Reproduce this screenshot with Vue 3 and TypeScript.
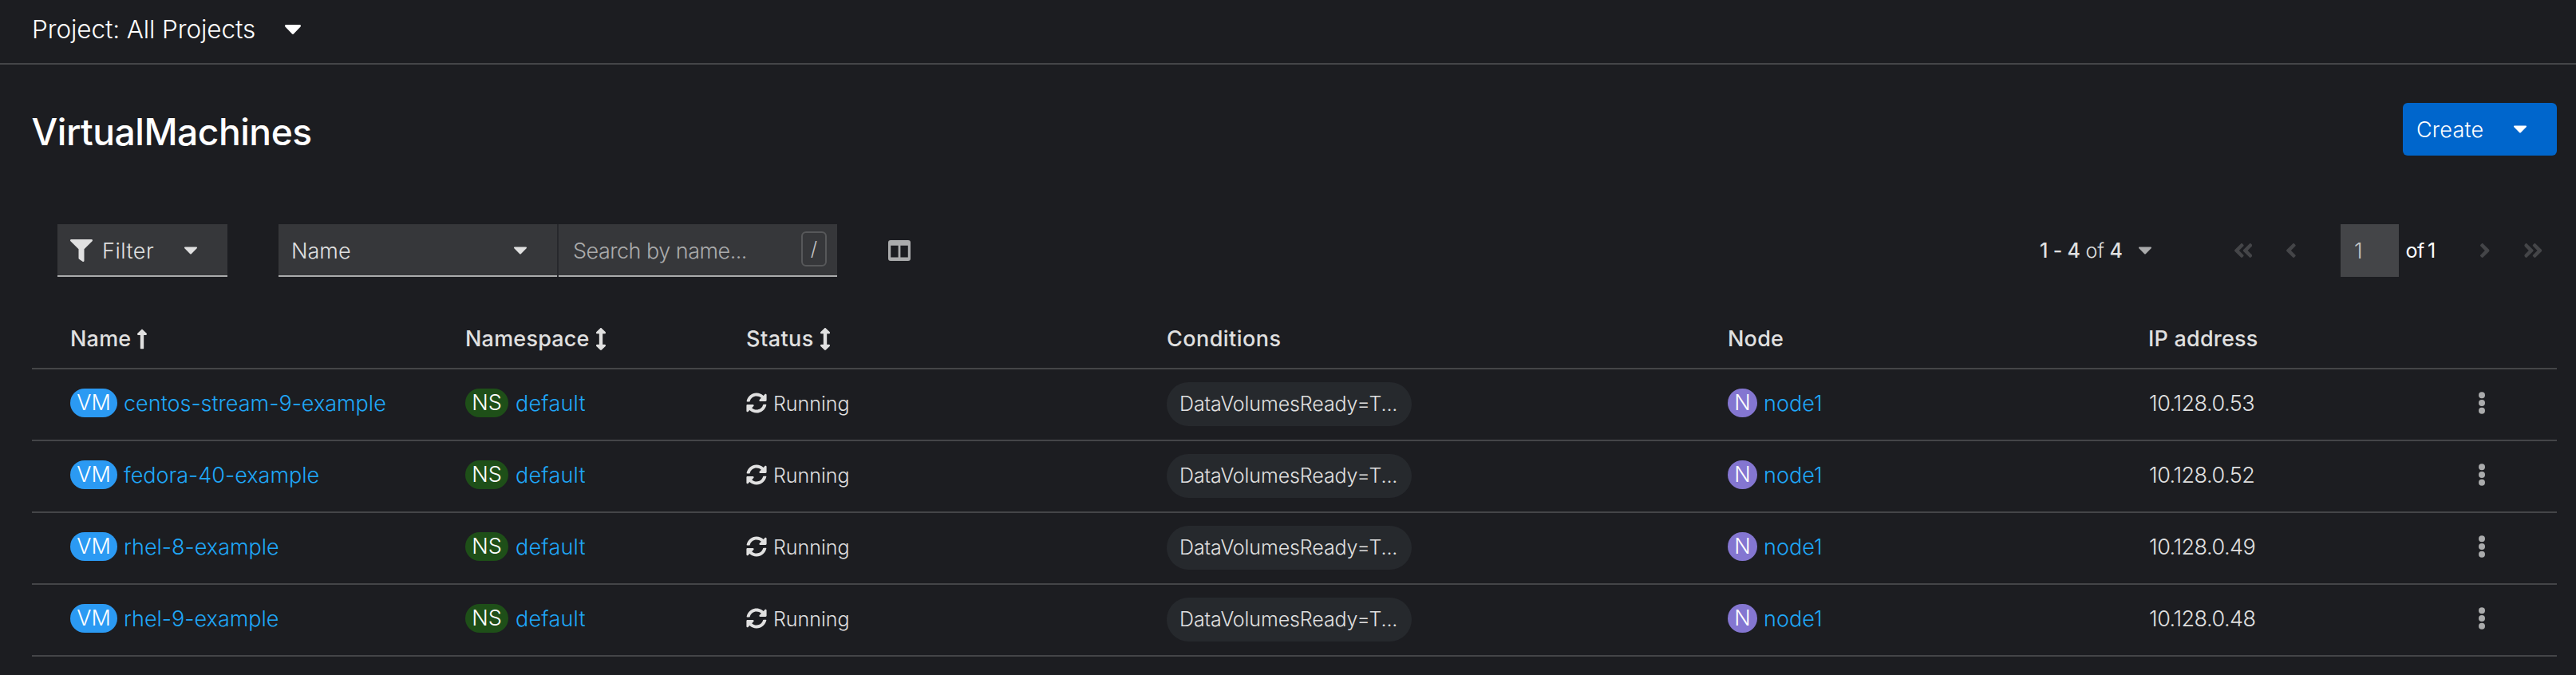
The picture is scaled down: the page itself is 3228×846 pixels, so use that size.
<script setup lang="ts">
interface Column {
  label: string
  sort?: 'asc' | 'both'
}
interface VirtualMachine {
  name: string
  namespace: string
  status: string
  condition: string
  node: string
  ip: string
}

const columns: Column[] = [
  { label: 'Name', sort: 'asc' },
  { label: 'Namespace', sort: 'both' },
  { label: 'Status', sort: 'both' },
  { label: 'Conditions' },
  { label: 'Node' },
  { label: 'IP address' },
]

const machine = (name: string, ip: string): VirtualMachine => ({
  name,
  namespace: 'default',
  status: 'Running',
  condition: 'DataVolumesReady=T...',
  node: 'node1',
  ip,
})

const machines: VirtualMachine[] = [
  machine('centos-stream-9-example', '10.128.0.53'),
  machine('fedora-40-example', '10.128.0.52'),
  machine('rhel-8-example', '10.128.0.49'),
  machine('rhel-9-example', '10.128.0.48'),
]

const caret =
  'M31.3 192h257.3c17.8 0 26.7 21.5 14.1 34.1L174.1 354.7c-7.8 7.8-20.5 7.8-28.3 0L17.2 226.1C4.6 213.5 13.5 192 31.3 192z'
const angle =
  'M31.7 239l136-136c9.4-9.4 24.6-9.4 33.9 0l22.6 22.6c9.4 9.4 9.4 24.6 0 33.9L127.9 256l96.4 96.4c9.4 9.4 9.4 24.6 0 33.9L201.7 409c-9.4 9.4-24.6 9.4-33.9 0l-136-136c-9.5-9.4-9.5-24.6-.1-34z'
const arrowUp =
  'M88 166.059V468c0 6.627 5.373 12 12 12h56c6.627 0 12-5.373 12-12V166.059h46.059c21.382 0 32.09-25.851 16.971-40.971l-86.059-86.059c-9.373-9.373-24.569-9.373-33.941 0l-86.059 86.059c-15.119 15.119-4.411 40.971 16.971 40.971H88z'
const arrowBoth =
  'M214.059 377.941H168V134.059h46.059c21.382 0 32.09-25.851 16.971-40.971L144.971 7.029c-9.373-9.373-24.568-9.373-33.941 0L24.971 93.088c-15.119 15.119-4.411 40.971 16.971 40.971H88v243.882H41.941c-21.382 0-32.09 25.851-16.971 40.971l86.059 86.059c9.373 9.373 24.568 9.373 33.941 0l86.059-86.059c15.12-15.119 4.412-40.971-16.97-40.971z'
</script>

<template>
  <div class="page">
    <header class="project-bar">
      <span class="project-label">Project: All Projects</span>
      <svg class="caret caret-large" viewBox="11 192 298 169" preserveAspectRatio="none"><path :d="caret" /></svg>
    </header>

    <section class="heading">
      <h1>VirtualMachines</h1>
      <button class="create">
        <span>Create</span>
        <svg class="caret" viewBox="11 192 298 169"><path :d="caret" /></svg>
      </button>
    </section>

    <section class="toolbar">
      <div class="field filter">
        <svg class="funnel" viewBox="0 0 512 512">
          <path d="M487.976 0H24.028C2.71 0-8.047 25.866 7.058 40.971L192 225.941V432c0 7.831 3.821 15.17 10.237 19.662l80 55.98C298.02 518.69 320 507.493 320 487.98V225.941l184.947-184.97C520.021 25.896 509.338 0 487.976 0z" />
        </svg>
        <span>Filter</span>
        <svg class="caret" viewBox="11 192 298 169"><path :d="caret" /></svg>
      </div>

      <div class="search-group">
        <div class="field select">
          <span>Name</span>
          <svg class="caret" viewBox="11 192 298 169"><path :d="caret" /></svg>
        </div>
        <div class="field search">
          <span class="placeholder">Search by name...</span>
          <kbd>/</kbd>
        </div>
      </div>

      <svg class="columns-icon" viewBox="0 0 28 26">
        <path fill-rule="evenodd" d="M3 0h22a3 3 0 0 1 3 3v20a3 3 0 0 1-3 3H3a3 3 0 0 1-3-3V3a3 3 0 0 1 3-3zM3.2 6.8v14.8h9.4V6.8zM15.4 6.8v14.8h9.4V6.8z" />
      </svg>

      <nav class="pagination">
        <span class="range"><b>1 - 4</b> of <b>4</b></span>
        <svg class="caret caret-muted" viewBox="11 192 298 169"><path :d="caret" /></svg>
        <svg class="double" viewBox="24 96 399 320"><path :d="angle" /><path :d="angle" transform="translate(192 0)" /></svg>
        <svg class="single" viewBox="24 96 207 320"><path :d="angle" /></svg>
        <span class="page-input">1</span>
        <span class="page-total">of 1</span>
        <svg class="single flip" viewBox="24 96 207 320"><path :d="angle" /></svg>
        <svg class="double flip" viewBox="24 96 399 320"><path :d="angle" /><path :d="angle" transform="translate(192 0)" /></svg>
      </nav>
    </section>

    <section class="table">
      <div class="row head">
        <div v-for="c in columns" :key="c.label" class="th">
          <span>{{ c.label }}</span>
          <svg v-if="c.sort" class="sort" viewBox="0 0 256 512"><path :d="c.sort === 'asc' ? arrowUp : arrowBoth" /></svg>
        </div>
      </div>
      <div v-for="vm in machines" :key="vm.name" class="row">
        <div class="cell">
          <span class="badge vm">VM</span>
          <a>{{ vm.name }}</a>
        </div>
        <div class="cell">
          <span class="badge ns">NS</span>
          <a class="ns-link">{{ vm.namespace }}</a>
        </div>
        <div class="cell status">
          <svg class="sync" viewBox="0 0 512 512">
            <path d="M370.72 133.28C339.458 104.008 298.888 87.962 255.848 88c-77.458.068-144.328 53.178-162.791 126.85-1.344 5.363-6.122 9.15-11.651 9.15H24.103c-7.498 0-13.194-6.807-11.807-14.176C33.933 94.924 134.813 8 256 8c66.448 0 126.791 26.136 171.315 68.685L463.03 40.97C478.149 25.851 504 36.559 504 57.941V192c0 13.255-10.745 24-24 24H345.941c-21.382 0-32.09-25.851-16.971-40.971l41.75-41.749zM32 296h134.059c21.382 0 32.09 25.851 16.971 40.971l-41.75 41.75c31.262 29.273 71.835 45.319 114.876 45.28 77.418-.07 144.315-53.144 162.787-126.849 1.344-5.363 6.122-9.15 11.651-9.15h57.304c7.498 0 13.194 6.807 11.807 14.176C478.067 417.076 377.187 504 256 504c-66.448 0-126.791-26.136-171.315-68.685L48.97 471.03C33.851 486.149 8 475.441 8 454.059V320c0-13.255 10.745-24 24-24z" />
          </svg>
          <span>{{ vm.status }}</span>
        </div>
        <div class="cell">
          <span class="chip">{{ vm.condition }}</span>
        </div>
        <div class="cell">
          <span class="badge node">N</span>
          <a>{{ vm.node }}</a>
        </div>
        <div class="cell ip">{{ vm.ip }}</div>
        <div class="cell">
          <svg class="kebab" viewBox="0 0 8 28"><circle cx="4" cy="4.3" r="4" /><circle cx="4" cy="14" r="4" /><circle cx="4" cy="23.7" r="4" /></svg>
        </div>
      </div>
    </section>
  </div>
</template>

<style>
body {
  background: #1c1d21;
}
</style>

<style scoped>
.page {
  box-sizing: border-box;
  width: 3228px;
  height: 846px;
  overflow: hidden;
  background: #1c1d21;
  color: #e0e0e0;
  font: 300 27px/36px Inter, 'Liberation Sans', sans-serif;
}
.page * {
  box-sizing: border-box;
}
svg {
  display: block;
  flex: none;
  fill: currentColor;
}
span,
a {
  white-space: nowrap;
}
.caret {
  width: 16px;
  height: 10px;
}
.project-bar {
  display: flex;
  align-items: center;
  height: 81px;
  padding: 0 0 6px 40px;
  border-bottom: 2px solid #444548;
  color: #fff;
  font-size: 31.5px;
}
.project-label {
  width: 317px;
  letter-spacing: -0.1px;
}
.caret-large {
  width: 20px;
  height: 12px;
}
.heading {
  display: flex;
  justify-content: space-between;
  padding: 48px 24px 0 39.5px;
}
h1 {
  margin: 6px 0 0;
  color: #fff;
  font-size: 46.2px;
  font-weight: 500;
  line-height: 60px;
  letter-spacing: -0.5px;
}
.create {
  display: flex;
  align-items: center;
  justify-content: space-between;
  width: 193px;
  height: 66px;
  padding: 0 38px 0 17px;
  border: 0;
  border-radius: 6px;
  background: #06c;
  color: #fff;
  font: inherit;
  letter-spacing: 0.2px;
}
.create span {
  margin-top: 2px;
}
.toolbar {
  display: flex;
  align-items: center;
  margin-top: 86px;
  padding: 0 24px 0 72px;
}
.field {
  display: flex;
  align-items: center;
  height: 66px;
  border-bottom: 2px solid #aaabac;
  background: #36373a;
}
.field > * {
  margin-top: 2px;
}
.field span {
  margin-top: 4px;
}
.filter {
  width: 213px;
  padding-left: 16px;
}
.filter span {
  width: 103px;
  margin-left: 12px;
  letter-spacing: 0.5px;
}
.funnel {
  width: 28px;
  height: 28px;
}
.search-group {
  display: flex;
  gap: 2px;
  margin-left: 64px;
  background: linear-gradient(#27282c, #27282c) center / 4px 100% no-repeat;
}
.select {
  justify-content: space-between;
  width: 349px;
  padding: 0 38px 0 16px;
}
.search {
  justify-content: space-between;
  width: 349px;
  padding: 0 13px 0 18px;
}
.placeholder {
  color: #aaabac;
  letter-spacing: -0.52px;
}
.field kbd {
  display: flex;
  align-items: center;
  justify-content: center;
  width: 32px;
  height: 44px;
  margin-top: -2px;
  border: 2px solid #57585a;
  border-radius: 6px;
  color: #c4c5c6;
  font: inherit;
  font-size: 24px;
}
.columns-icon {
  width: 28px;
  height: 26px;
  margin-left: 64px;
  color: #aaabac;
}
.pagination {
  display: grid;
  grid-template-columns: 124px 120px 65px 68px 81.5px 93px 55.5px 41px;
  align-items: center;
  margin-left: auto;
  color: #444548;
}
.range {
  color: #e0e0e0;
  font-size: 25px;
  letter-spacing: -0.2px;
}
.range b {
  font-weight: 500;
}
.caret-muted {
  color: #aaabac;
}
.double {
  width: 22.4px;
  height: 18px;
}
.single {
  width: 11.7px;
  height: 18px;
}
.flip {
  transform: scaleX(-1);
}
.page-input {
  width: 73px;
  height: 66px;
  padding-left: 17px;
  background: #444548;
  color: #c4c5c6;
  line-height: 67px;
}
.page-total {
  color: #fff;
  font-size: 25px;
  font-weight: 400;
  letter-spacing: -0.4px;
  word-spacing: -2.5px;
}
.table {
  margin: 41px 24px 0 40px;
}
.row {
  display: grid;
  grid-template-columns: 495px 352px 527px 703px 527px 414px 1fr;
  align-items: center;
  height: 90px;
  padding: 0 0 4px 48px;
  border-bottom: 2px solid #444548;
}
.row.head {
  height: 75px;
  padding-bottom: 0;
  font-weight: 500;
  letter-spacing: 0.2px;
}
.th {
  display: flex;
  align-items: center;
  gap: 7px;
}
.th:nth-child(3),
.th:nth-child(4) {
  letter-spacing: 0.45px;
}
.cell {
  display: flex;
  align-items: center;
}
.badge {
  height: 36px;
  margin-right: 8px;
  border-radius: 18px;
  color: #fff;
  text-align: center;
}
.vm {
  width: 59px;
  background: #2b9af3;
}
.ns {
  width: 54px;
  margin-right: 9px;
  background: #1e4f18;
}
.node {
  width: 37px;
  background: #8476d1;
}
a {
  margin-top: 2px;
  color: #1fa7f8;
}
.ns-link {
  letter-spacing: 0.2px;
}
.sort {
  width: 14px;
  height: 28px;
}
.sync {
  width: 26px;
  height: 26px;
  margin-right: 8px;
}
.status span {
  margin-top: 2px;
  font-size: 25px;
}
.chip {
  width: 307px;
  height: 55px;
  margin-top: 3px;
  padding-left: 16px;
  border-radius: 28px;
  background: #26292d;
  font-size: 25px;
  letter-spacing: -0.1px;
  line-height: 54px;
}
.ip {
  margin-top: 1px;
  padding-left: 1px;
  letter-spacing: -0.5px;
}
.kebab {
  width: 8px;
  height: 28px;
  color: #aaabac;
}
</style>
